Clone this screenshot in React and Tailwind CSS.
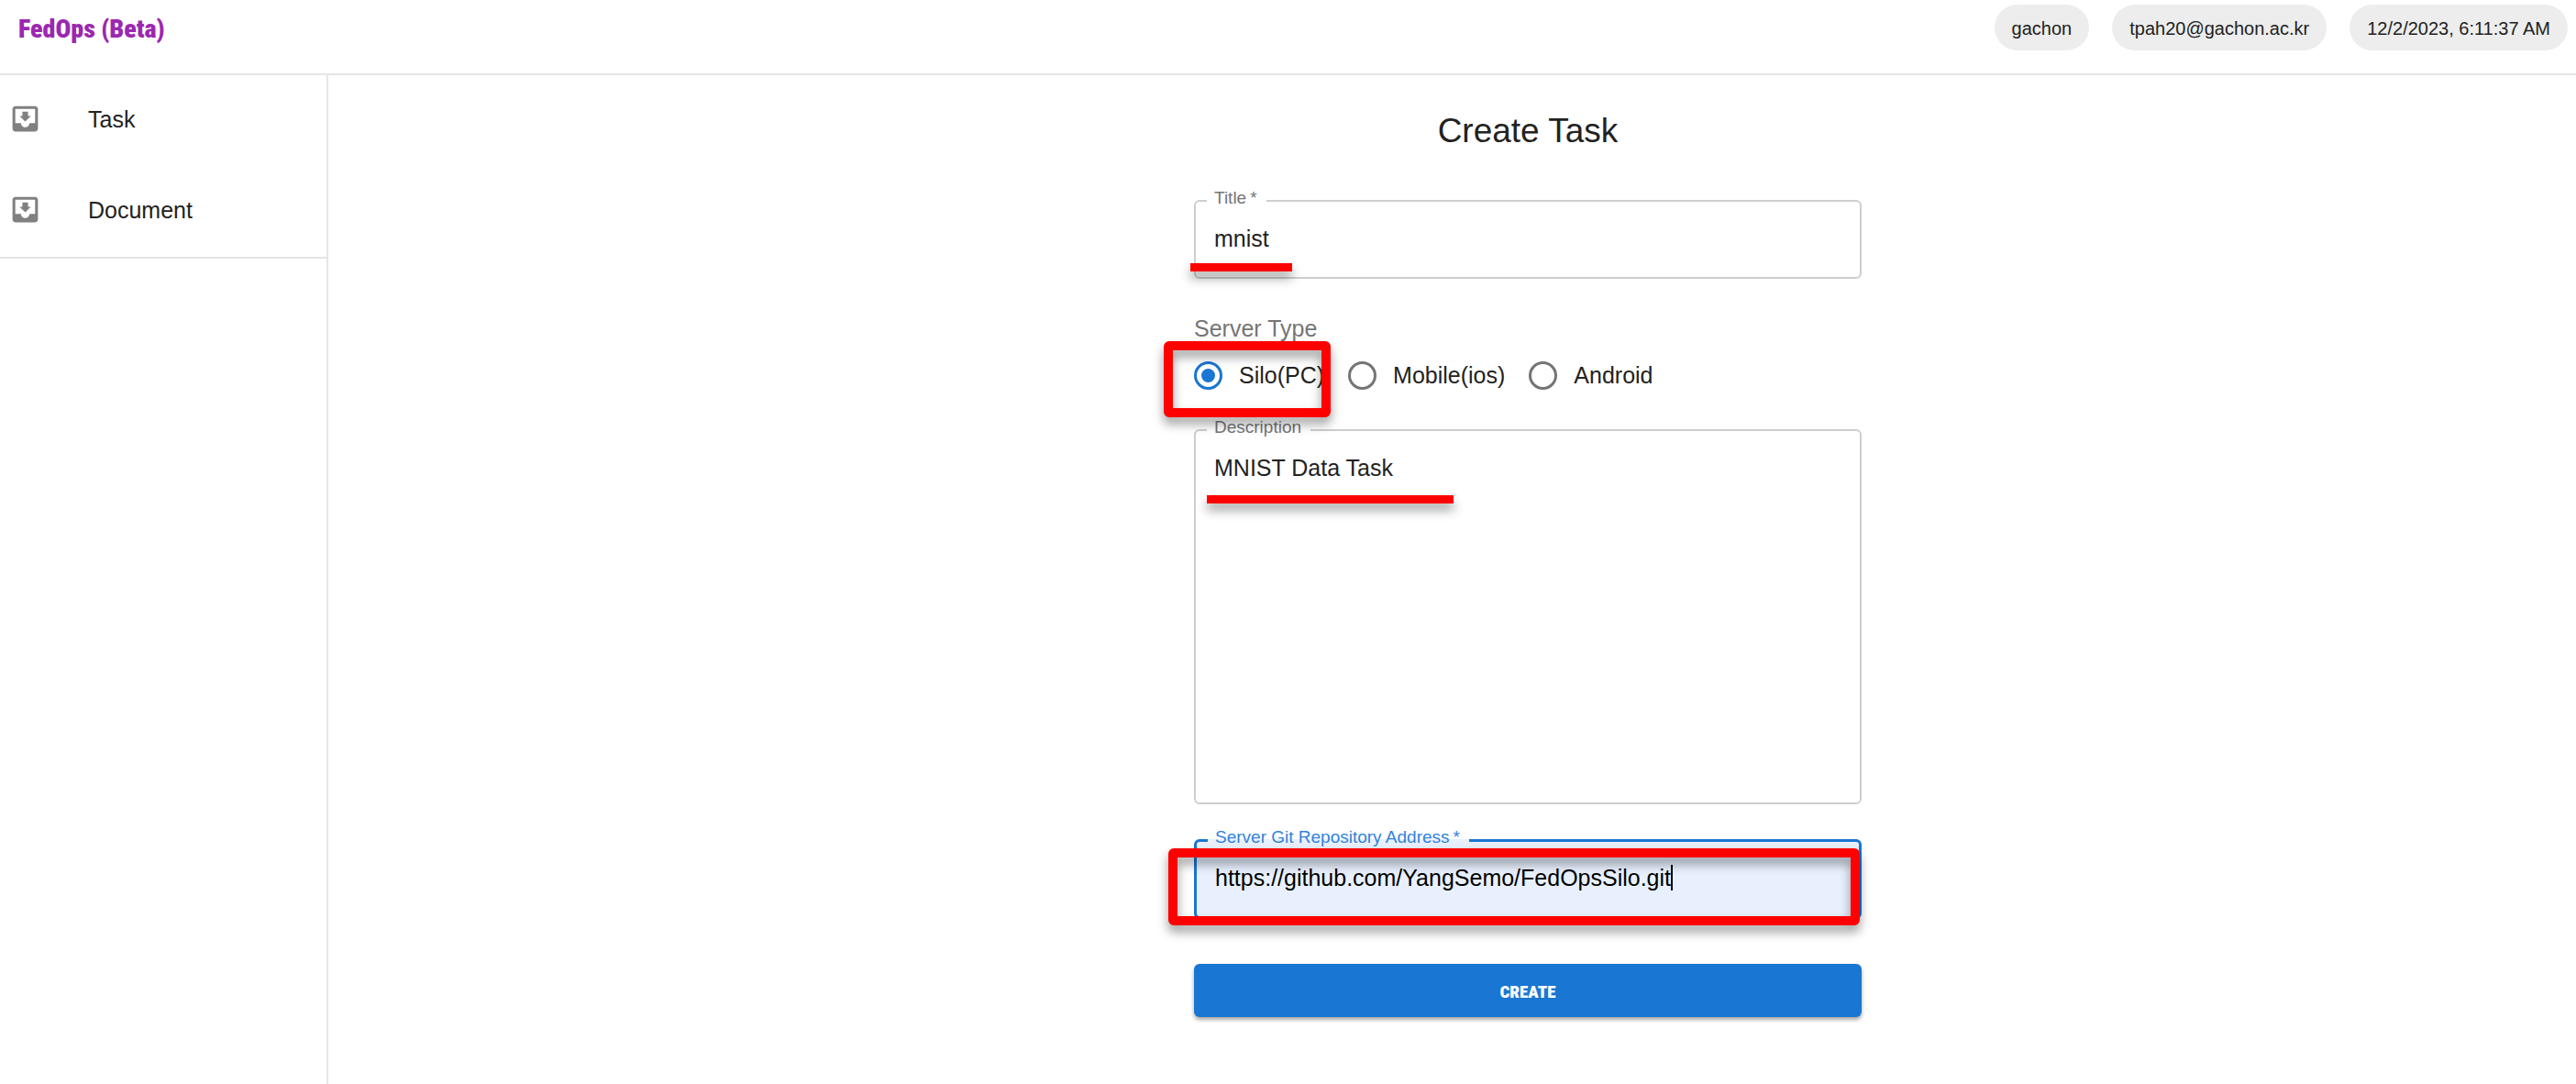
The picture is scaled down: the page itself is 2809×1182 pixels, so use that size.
import React from "react";
import { MdMoveToInbox } from "react-icons/md";

const user = ["gachon", "tpah20@gachon.ac.kr", "12/2/2023, 6:11:37 AM"];
const links = ["Task", "Document"];
const servers = ["Silo(PC)", "Mobile(ios)", "Android"];

const display =
  "font-['Roboto_Condensed','Anton','Impact',sans-serif] font-black";

function Chip({ children }) {
  return (
    <span className="flex h-[50px] items-center rounded-full bg-[#ededed] px-[19px] pt-0.5 text-[20px]">
      {children}
    </span>
  );
}

function Field({ id, label, required, focused, className = "", children }) {
  return (
    <fieldset
      className={
        (focused
          ? "border-[3px] border-[#1976d2] bg-[#e8f0fe] text-black "
          : "border-2 border-[#cecece] ") +
        "relative min-w-0 rounded-md px-5 pt-[10px] " +
        className
      }
    >
      <legend
        className={
          (focused ? "text-[#2f83d9] " : "text-[#757575] ") +
          "-ml-2 px-2 pb-1.5 text-[19px] leading-5"
        }
      >
        <label htmlFor={id} className="flex gap-1 pr-0.5">
          {label}
          {required && <span aria-hidden="true">*</span>}
        </label>
      </legend>
      {children}
    </fieldset>
  );
}

function Mark({ className }) {
  return (
    <span
      aria-hidden="true"
      className={
        "pointer-events-none absolute [filter:drop-shadow(0_7px_6px_rgba(0,0,0,0.4))] " +
        className
      }
    />
  );
}

export default function App() {
  return (
    <div className="flex min-h-screen flex-col bg-white font-['Liberation_Sans',Arial,sans-serif] text-[25px] leading-9 text-[#222]">
      <header className="flex h-[82px] items-start justify-between border-b-2 border-[#e5e5e5] pt-[5px] pr-[9px] pl-5">
        <a
          href="#home"
          className={display + " pt-0.5 text-[28px] leading-[50px] text-[#9c27b0]"}
        >
          FedOps (Beta)
        </a>
        <div className="flex gap-[25px]">
          {user.map((text) => (
            <Chip key={text}>{text}</Chip>
          ))}
        </div>
      </header>

      <div className="flex flex-1">
        <aside className="w-[358px] shrink-0 border-r-2 border-[#e5e5e5]">
          <nav className="border-b-2 border-[#e5e5e5]">
            {links.map((text) => (
              <a
                key={text}
                href={"#" + text.toLowerCase()}
                className="flex h-[99px] items-center gap-[50px] pb-1 pl-[9px]"
              >
                <MdMoveToInbox className="size-[37px] text-[#808080]" />
                {text}
              </a>
            ))}
          </nav>
        </aside>

        <main className="flex-1 pt-9 pl-[165px]">
          <form
            className="mx-auto flex w-full max-w-[728px] flex-col"
            onSubmit={(e) => e.preventDefault()}
          >
            <h1 className="text-center text-[37px] leading-[50px]">
              Create Task
            </h1>

            <Field id="title" label="Title" required className="mt-[38px] pb-6">
              <input
                id="title"
                defaultValue="mnist"
                className="block h-9 w-full outline-none"
              />
              <Mark className="bottom-1.5 -left-1.5 h-[9px] w-[111px] bg-[#ff0000]" />
            </Field>

            <div
              role="radiogroup"
              aria-labelledby="server-type"
              className="relative mt-[39px]"
            >
              <p id="server-type" className="leading-[30px] text-[#757575]">
                Server Type
              </p>
              <div className="mt-[21px] flex gap-[26px]">
                {servers.map((name, i) => (
                  <label
                    key={name}
                    className="flex items-center gap-[18px] leading-[31px]"
                  >
                    <input
                      type="radio"
                      name="server"
                      defaultChecked={i === 0}
                      className="size-[31px] appearance-none rounded-full border-[3px] border-[#757575] bg-clip-content p-[5px] checked:border-[#1976d2] checked:bg-[#1976d2]"
                    />
                    {name}
                  </label>
                ))}
              </div>
              <Mark className="-bottom-[30px] -left-[33px] z-10 h-[83px] w-[182px] rounded-md border-[10px] border-[#ff0000]" />
            </div>

            <Field id="description" label="Description" className="mt-[31px]">
              <textarea
                id="description"
                defaultValue="MNIST Data Task"
                className="block h-[383px] w-full resize-none outline-none"
              />
              <Mark className="top-[58px] left-3 h-[9px] w-[269px] bg-[#ff0000]" />
            </Field>

            <Field
              id="repository"
              label="Server Git Repository Address"
              required
              focused
              className="mt-[26px] pb-6"
            >
              <div className="flex h-9 items-center">
                <input
                  id="repository"
                  defaultValue="https://github.com/YangSemo/FedOpsSilo.git"
                  className="h-9 [field-sizing:content] outline-none"
                />
                <span aria-hidden="true" className="h-7 w-0.5 bg-black" />
              </div>
              <Mark className="-top-1 -left-[31px] h-[84px] w-[754px] rounded-md border-[10px] border-[#ff0000]" />
            </Field>

            <button
              type="submit"
              className={
                display +
                " mt-[49px] h-[58px] rounded-md bg-[#1976d2] pt-1 text-[19px] text-white shadow-[0_3px_4px_rgba(0,0,0,0.35)]"
              }
            >
              CREATE
            </button>
          </form>
        </main>
      </div>
    </div>
  );
}
